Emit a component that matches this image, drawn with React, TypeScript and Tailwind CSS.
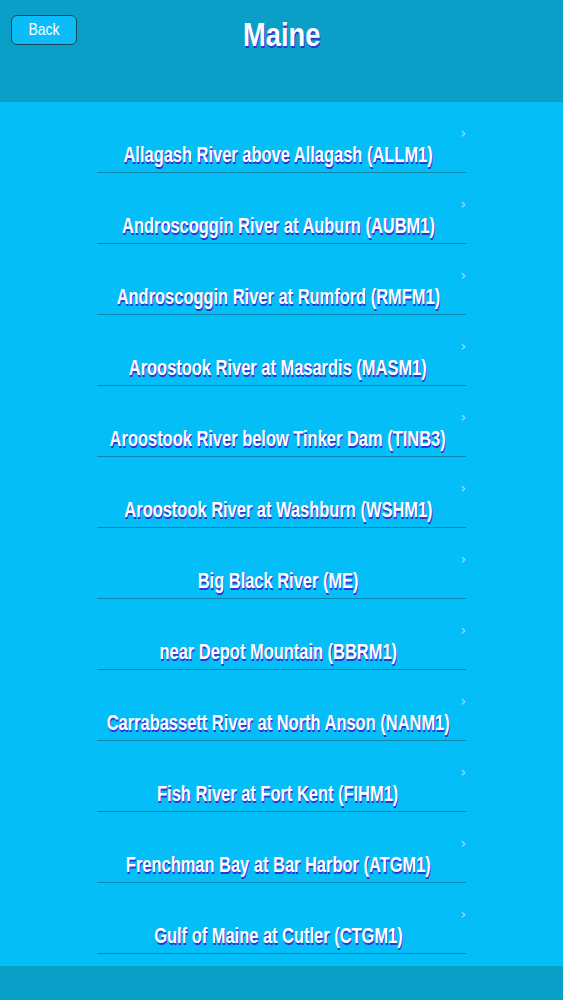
// App.tsx
// River gauge list for a single state, with header and footer bars

const stations = [
  "Allagash River above Allagash (ALLM1)",
  "Androscoggin River at Auburn (AUBM1)",
  "Androscoggin River at Rumford (RMFM1)",
  "Aroostook River at Masardis (MASM1)",
  "Aroostook River below Tinker Dam (TINB3)",
  "Aroostook River at Washburn (WSHM1)",
  "Big Black River (ME)",
  "near Depot Mountain (BBRM1)",
  "Carrabassett River at North Anson (NANM1)",
  "Fish River at Fort Kent (FIHM1)",
  "Frenchman Bay at Bar Harbor (ATGM1)",
  "Gulf of Maine at Cutler (CTGM1)",
];

// no condensed face installed, so squeeze Liberation Sans horizontally
const narrow = "font-['Liberation_Sans',Arial,sans-serif] inline-block origin-center";

function StationRow({ name }: { name: string }) {
  return (
    <div className="relative h-[71px] border-b border-[#0a86ac] flex items-end justify-center pb-[1px] pr-[7px]">
      <span
        className={`${narrow} scale-x-[0.765] font-bold text-[21.5px] text-white [text-shadow:1px_2px_0_#2c35d8] whitespace-nowrap`}
      >
        {name}
      </span>
      <span className="absolute right-[0px] top-[21px] text-[#a6e4fb] text-[14px] font-['DejaVu_Sans',sans-serif]">
        ›
      </span>
    </div>
  );
}

export default function App() {
  return (
    <div className="w-[563px] h-[1000px] flex flex-col bg-[#04bff7] overflow-hidden">
      {/* Header */}
      <div className="h-[102px] bg-[#099fc7] relative flex justify-center shrink-0">
        <button className="absolute left-[11px] top-[15px] w-[66px] h-[30px] rounded-[6px] bg-[#0bbcf6] border border-[#17455a] flex items-center justify-center">
          <span className={`${narrow} scale-x-[0.82] text-[17px] text-white`}>Back</span>
        </button>
        <div className="mt-[15px] h-[40px]">
          <h1
            className={`${narrow} scale-x-[0.83] font-bold text-[33px] text-white [text-shadow:1px_2px_0_#2c35d8] leading-[40px]`}
          >
            Maine
          </h1>
        </div>
      </div>

      {/* List */}
      <div className="flex-1 overflow-hidden">
        <div className="w-[369px] mx-auto">
          {stations.map((s) => (
            <StationRow key={s} name={s} />
          ))}
        </div>
      </div>

      {/* Footer */}
      <div className="h-[34px] bg-[#099fc7] shrink-0" />
    </div>
  );
}
